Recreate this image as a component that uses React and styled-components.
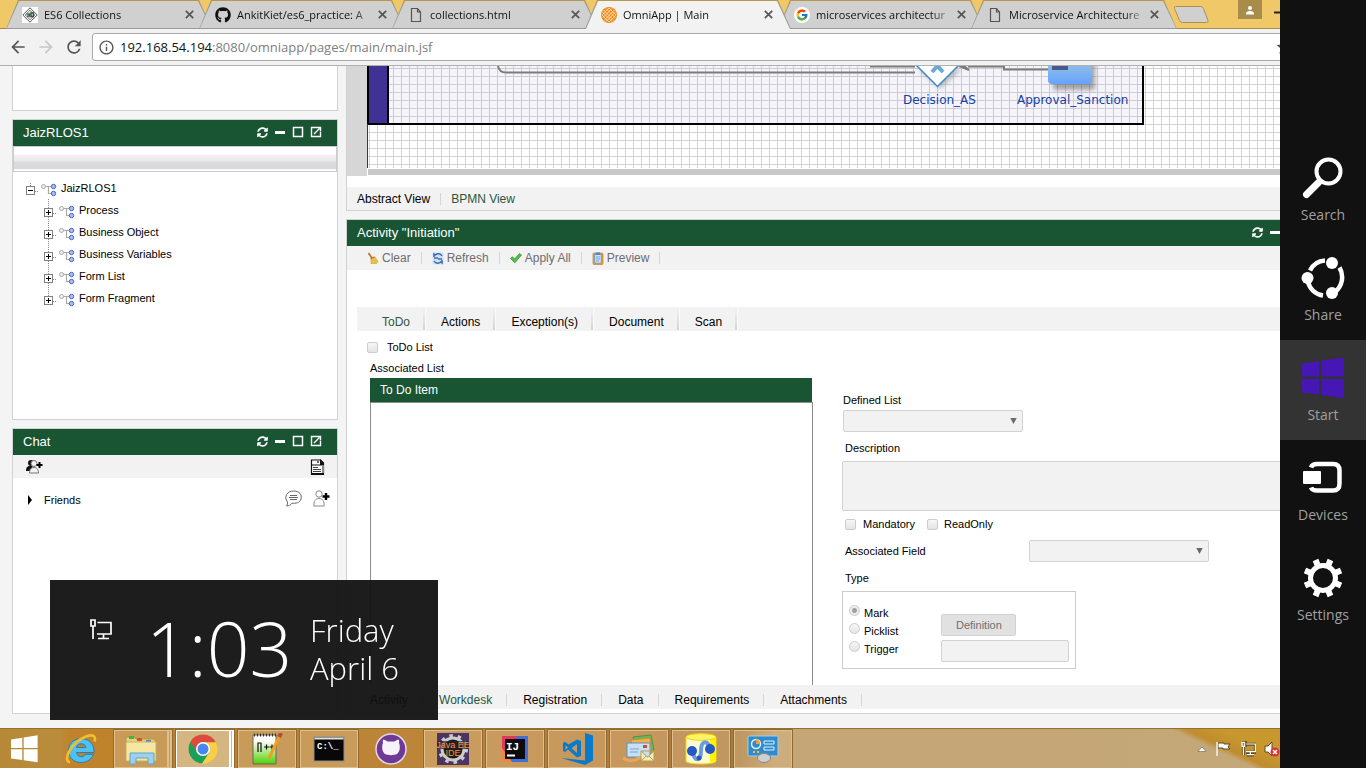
import React from "react";
import styled, { createGlobalStyle, css } from "styled-components";
import { MdArrowBack, MdArrowForward, MdRefresh, MdInfoOutline, MdStar } from "react-icons/md";
import { FaGithub, FaSyncAlt } from "react-icons/fa";
import { FcGoogle } from "react-icons/fc";

const GREEN = "#195532";
const UI = `"Open Sans", "Noto Sans", sans-serif`;

const GlobalStyle = createGlobalStyle`
  *, *::before, *::after { box-sizing: border-box; }
  body {
    margin: 0;
    overflow: hidden;
    background: #f4f4f4;
    color: #000;
    font: 12px/16px "Liberation Sans", Arial, sans-serif;
  }
  button, input, select, textarea { font: inherit; color: inherit; }
  button { border: 0; padding: 0; background: none; }
  a { color: inherit; text-decoration: none; }
  ul { list-style: none; margin: 0; padding: 0; }
  svg { display: block; flex: none; }
`;

const Desktop = styled.div`
  display: flex;
  flex-direction: column;
  min-height: 100vh;
`;

/* ---------- browser chrome ---------- */

const TabStrip = styled.div`
  display: flex;
  align-items: stretch;
  height: 29px;
  padding-left: 6px;
  background: #f0c868;
  border-bottom: 1px solid #a08a58;
  font: 11px/16px ${UI};
`;

const BrowserTab = styled.button`
  position: relative;
  display: flex;
  align-items: center;
  width: 206px;
  height: 29px;
  margin-right: -13px;
  padding: 0 18px 0 16px;
  gap: 6px;
  color: #111;
  z-index: ${(p) => (p.$active ? 2 : 0)};

  &::before,
  &::after {
    content: "";
    position: absolute;
    z-index: -1;
  }
  &::before {
    inset: 0;
    background: linear-gradient(#b8964a 0 2px, #999 6px);
    clip-path: polygon(0 100%, 12px 0, calc(100% - 13px) 0, 100% 100%);
  }
  &::after {
    inset: 1px 1px ${(p) => (p.$active ? "0" : "1px")} 1px;
    background: ${(p) => (p.$active ? "#f2f2f2" : "#d0d0d0")};
    clip-path: polygon(0 100%, 12px 0, calc(100% - 13px) 0, 100% 100%);
  }
`;

const TabTitle = styled.span`
  flex: 1;
  white-space: nowrap;
  text-align: left;
  mask-image: linear-gradient(90deg, #000 calc(100% - 20px), rgba(0, 0, 0, 0.2));
`;

const NewTab = styled.button`
  align-self: center;
  width: 35px;
  height: 17px;
  margin-left: 10px;
`;

const WindowButtons = styled.div`
  display: flex;
  gap: 12px;
  margin-left: auto;
  padding-right: 82px;
`;

const UserButton = styled.button`
  display: grid;
  place-items: center;
  width: 24px;
  height: 19px;
  background: #a88c4c;
`;

const Toolbar = styled.div`
  display: flex;
  align-items: center;
  height: 37px;
  padding: 0 64px 0 8px;
  gap: 8px;
  background: #f2f2f2;
  border-bottom: 1px solid #b0b0b0;
`;

const NavButton = styled.button`
  display: grid;
  place-items: center;
  width: 20px;
  height: 20px;
  color: ${(p) => (p.disabled ? "#c8c8c8" : "#555")};
`;

const Omnibox = styled.label`
  display: flex;
  flex: 1;
  align-items: center;
  height: 28px;
  padding: 0 8px 0 5px;
  gap: 5px;
  border: 1px solid #a9a9a9;
  border-radius: 3px;
  background: #fff;
  color: #555;
`;

const Address = styled.span`
  flex: 1;
  font: 13px/20px ${UI};
  color: #808080;
  b { font-weight: 400; color: #111; }
`;

/* ---------- page ---------- */

const Page = styled.main`
  display: flex;
  flex: 1;
  gap: 8px;
  padding: 0 33px 14px 12px;
`;

const SideColumn = styled.aside`
  display: flex;
  flex: 0 0 326px;
  flex-direction: column;
  gap: 8px;
`;

const MainColumn = styled.div`
  display: flex;
  flex: 1;
  flex-direction: column;
  gap: 8px;
  min-width: 0;
`;

const Panel = styled.section`
  display: flex;
  flex-direction: column;
  flex: ${(p) => (p.$grow ? "1" : "none")};
  min-height: ${(p) => p.$min || 0}px;
  background: #fff;
  border: 1px solid #d2d2d2;
  ${(p) => p.$openTop && css`border-top: 0;`}
`;

const PanelHeader = styled.header`
  display: flex;
  align-items: center;
  justify-content: space-between;
  height: 26px;
  padding: 0 14px 0 10px;
  background: ${GREEN};
  color: #fff;
`;

const PanelTitle = styled.h2`
  margin: 0;
  font-weight: 400;
  font-size: 13px;
  line-height: 16px;
`;

const PanelTools = styled.div`
  display: flex;
  gap: 4px;
  padding-bottom: 2px;
`;

const ToolButton = styled.button`
  display: grid;
  place-items: center;
  width: 14px;
  height: 14px;
  color: #fff;
`;

const GradientBar = styled.div`
  height: 26px;
  border: 1px solid #ccc;
  background: linear-gradient(#fff 30%, #f2f0f2 34%, #eae8ea 58%, #dcdadd 64%, #d8d8da 92%, #fff 94%);
`;

const Tree = styled.ul`
  padding: 5px 0 0 12px;
  font-size: 11px;
`;

const TreeRow = styled.div`
  display: flex;
  height: 22px;
  gap: 2px;
  line-height: 22px;
`;

const Branch = styled.ul`
  padding-left: 18px;
`;

const ChatBar = styled.div`
  display: flex;
  align-items: center;
  justify-content: space-between;
  height: 23px;
  padding: 0 12px 0 13px;
  background: #f2f2f2;
`;

const ChatGroup = styled.div`
  display: flex;
  align-items: center;
  height: 40px;
  padding: 0 7px 0 14px;
  gap: 11px;
  font-size: 11px;
  span { flex: 1; padding-top: 4px; }
`;

/* ---------- process canvas ---------- */

const CanvasFrame = styled.div`
  display: flex;
  height: 121px;
`;

const Gutter = styled.div`
  width: 20px;
  height: 110px;
  background: #d6d6d6;
`;

const CanvasArea = styled.div`
  flex: 1;
  min-width: 0;
  svg { width: 100%; }
`;

const CanvasScroll = styled.div`
  height: 6px;
  margin: 1px 0 0 1px;
  background: #c8c8c8;
`;

/* ---------- strips of links ---------- */

const LinkStrip = styled.nav`
  display: flex;
  align-items: center;
  height: ${(p) => p.$height || 24}px;
  margin: ${(p) => (p.$inset ? "0 0 4px 10px" : "0")};
  padding: ${(p) => (p.$inset ? "5px 0 0 13px" : "0 0 0 10px")};
  background: #f2f2f2;
`;

const StripLink = styled.a`
  color: ${(p) => (p.$on ? "#28573c" : "#000")};
`;

const Divider = styled.i`
  width: 1px;
  height: 12px;
  margin: ${(p) => p.$m || "0 16px 0 14px"};
  background: #cfd8d3;
`;

const ActionBar = styled.div`
  display: flex;
  align-items: center;
  height: 24px;
  padding-left: 20px;
  background: #f2f2f2;
  color: #6e6e6e;
`;

const ActionButton = styled.button`
  display: flex;
  align-items: center;
  gap: 3px;
`;

const FormTabs = styled.div`
  display: flex;
  height: 24px;
  margin: 37px 0 0 10px;
  padding-left: 10px;
  background: #f2f2f2;
`;

const FormTab = styled.button`
  height: 22px;
  margin-top: 1px;
  padding: 5px 15px 0;
  background: linear-gradient(#f2f2f2, #d4d4d4) right / 2px 100% no-repeat;
  border-right: 1px solid #fafafa;
  color: ${(p) => (p.$on ? "#33573f" : "#000")};
`;

/* ---------- form ---------- */

const FormArea = styled.div`
  display: flex;
  flex: 1;
  flex-direction: column;
  padding: 0 0 0 20px;
  font-size: 11px;
`;

const CheckLabel = styled.label`
  display: flex;
  align-items: center;
  gap: ${(p) => p.$gap || 6}px;
`;

const TodoLine = styled.div`
  display: flex;
  align-items: center;
  height: 29px;
  padding-top: 3px;
`;

const Tick = styled.input`
  appearance: none;
  width: 11px;
  height: 11px;
  margin: 0;
  border: 1px solid #ccc;
  border-radius: ${(p) => (p.type === "radio" ? "50%" : "2px")};
  background: linear-gradient(#f6f6f6, #e4e4e4);
  &[type="radio"]:checked {
    background: radial-gradient(circle, #a0a0a0 0 2px, #ececec 3px);
  }
`;

const Columns = styled.div`
  display: flex;
  flex: 1;
  gap: 29px;
  padding-left: 3px;
`;

const ListColumn = styled.div`
  display: flex;
  flex-direction: column;
  width: 443px;
  gap: 2px;
`;

const TodoList = styled.div`
  display: flex;
  flex: 1;
  flex-direction: column;
`;

const TodoTable = styled.table`
  width: calc(100% - 1px);
  border-collapse: collapse;
  th {
    height: 24px;
    padding: 0 10px;
    background: ${GREEN};
    color: #fff;
    font-weight: 400;
    font-size: 12px;
    text-align: left;
  }
`;

const TodoBody = styled.div`
  flex: 1;
  border: solid #8c8c8c;
  border-width: 1px 1px 0;
`;

const Fields = styled.form`
  display: flex;
  flex: 1;
  flex-direction: column;
  align-items: flex-start;
  padding-top: 32px;
`;

const FieldLabel = styled.label`
  display: block;
  margin: ${(p) => p.$m || "0"};
  line-height: 16px;
`;

const fieldBox = css`
  border: 1px solid #d2d2d2;
  border-radius: 2px;
  background: #f2f2f2;
`;

const SelectWrap = styled.div`
  position: relative;
  width: 180px;
  margin-left: ${(p) => p.$left || 0}px;
  svg { position: absolute; right: 6px; top: 7px; pointer-events: none; }
`;

const Select = styled.select`
  ${fieldBox}
  appearance: none;
  display: block;
  width: 100%;
  height: 22px;
  opacity: 1;
`;

const Description = styled.textarea`
  ${fieldBox}
  display: block;
  width: calc(100% - 8px);
  height: 50px;
  resize: none;
`;

const FlagRow = styled.div`
  display: flex;
  align-items: center;
  gap: 12px;
  height: 26px;
  padding-left: 3px;
`;

const FieldRow = styled.div`
  display: flex;
  align-items: center;
  gap: 103px;
  margin: 3px 0 8px 3px;
`;

const TypeBox = styled.fieldset`
  display: flex;
  gap: 43px;
  width: 234px;
  height: 78px;
  margin: 5px 0 0;
  padding: 12px 6px 0;
  border: 1px solid #ccc;
  min-width: 0;
`;

const RadioLabel = styled.label`
  display: flex;
  gap: 4px;
  height: 18px;
  padding-top: 1px;
`;

const TypeActions = styled.div`
  display: flex;
  flex-direction: column;
  align-items: flex-start;
  gap: 4px;
  padding-top: 10px;
`;

const DefinitionButton = styled.button`
  width: 75px;
  height: 22px;
  border: 1px solid #d2d2d2;
  border-radius: 2px;
  background: #e1e1e1;
  color: #707070;
`;

const TypeInput = styled.input`
  ${fieldBox}
  width: 128px;
  height: 22px;
`;

/* ---------- desktop overlays ---------- */

const Taskbar = styled.footer`
  display: flex;
  align-items: center;
  height: 40px;
  gap: 4px;
  border-top: 1px solid #94702e;
  background:
    linear-gradient(25deg, transparent 86.5%, #bf8c2e 87.5%, #c8982e 90%),
    linear-gradient(90deg, #b68938 0, #ba8c3c 60px, #c0832a 70px, #b9812f 200px, #bd8538 420px, #b57a38 640px, #a57b40 740px, #c5a676 775px, #c4a878 1366px);
`;

const TaskButton = styled.button`
  display: grid;
  place-items: center;
  width: ${(p) => (p.$start ? 48 : 58)}px;
  height: 38px;
  ${(p) =>
    p.$open &&
    css`
      border: 1px solid ${p.$active ? "#fff" : "#dfc08d"};
      outline: 1px solid #8f6a35;
      background: rgba(${p.$active ? "235,225,200,.55" : "215,180,130,.5"});
    `}
  ${(p) =>
    p.$stacked &&
    css`
      border-right-width: 5px;
      border-right-style: double;
    `}
`;

const Tray = styled.div`
  display: flex;
  align-items: center;
  gap: 8px;
  margin-left: auto;
  padding-right: 86px;
`;

const Charms = styled.nav`
  position: fixed;
  inset: 0 0 0 auto;
  z-index: 10;
  display: flex;
  flex-direction: column;
  justify-content: center;
  width: 86px;
  padding-top: 12px;
  background: #111;
`;

const Charm = styled.button`
  display: flex;
  flex-direction: column;
  align-items: center;
  height: 100px;
  padding-top: 16px;
  gap: 1px;
  background: ${(p) => (p.$on ? "#333" : "none")};
  color: #a0a0a0;
  font: 14px/24px ${UI};
`;

const Clock = styled.div`
  position: fixed;
  left: 50px;
  bottom: 48px;
  z-index: 9;
  display: flex;
  width: 388px;
  height: 140px;
  padding-left: 38px;
  background: rgba(17, 17, 17, 0.95);
  color: #fff;
  font-family: ${UI};
  font-weight: 300;
  svg { margin-top: 38px; }
`;

const Time = styled.div`
  width: 150px;
  margin-left: 34px;
  padding-top: 14px;
  font-size: 75px;
  line-height: 108px;
  white-space: nowrap;
`;

const DateText = styled.div`
  margin-left: 14px;
  padding-top: 31px;
  font-size: 31px;
  line-height: 38px;
  white-space: nowrap;
`;

/* ---------- drawings ---------- */

const Favicon = {
  es6: (
    <svg width="16" height="16" viewBox="0 0 16 16">
      <rect width="16" height="16" fill="#fff" />
      <path d="M8 .8 15.2 8 8 15.2.8 8z" fill="none" stroke="#555" />
      <path d="M8 3 13 8 8 13 3 8z" fill="#cfd6d0" stroke="#666" strokeWidth=".6" />
      <path d="M4.500 7.200h3v2h-2.500M9 6h2.500v3.500H9z" fill="none" stroke="#2c5a3c" strokeWidth="1.300" />
    </svg>
  ),
  github: <FaGithub size={16} color="#111" />,
  file: (
    <svg width="16" height="16" viewBox="0 0 16 16">
      <path d="M3.500 1.500h6l3 3.500v9.500h-9zM9.500 1.500V5h3" fill="none" stroke="#555" strokeWidth="1.200" />
    </svg>
  ),
  omni: (
    <svg width="16" height="16" viewBox="0 0 16 16">
      <circle cx="8" cy="8" r="8" fill="#f08a1c" />
      <g stroke="#ffe3bd" strokeWidth=".8" fill="none">
        <path d="M2.500 3 13 13.500M13.500 3 3 13.500M5 1.500 14.500 11M1.500 5 11 14.500M11 1.500 1.500 11M14.500 5 5 14.500M8 1l7 7-7 7-7-7z" />
      </g>
    </svg>
  ),
  google: (
    <svg width="16" height="16" viewBox="0 0 16 16">
      <circle cx="8" cy="8" r="8" fill="#fff" />
      <FcGoogle size={13} x="1.500" y="1.500" />
    </svg>
  ),
};

const CloseGlyph = () => (
  <svg width="9" height="9" viewBox="0 0 9 9">
    <path d="M.8.8l7.400 7.400M8.200.8.8 8.200" stroke="#555" strokeWidth="1.700" />
  </svg>
);

const Tools = ({ name }) => (
  <PanelTools>
    <ToolButton aria-label={`Refresh ${name}`}>
      <FaSyncAlt size={11} />
    </ToolButton>
    <ToolButton aria-label={`Minimise ${name}`}>
      <svg width="12" height="12"><path d="M1 6.500h10" stroke="#fff" strokeWidth="3" /></svg>
    </ToolButton>
    <ToolButton aria-label={`Maximise ${name}`}>
      <svg width="12" height="12"><rect x="1.500" y="1.500" width="9" height="9" fill="none" stroke="#fff" strokeWidth="1.500" /></svg>
    </ToolButton>
    <ToolButton aria-label={`Open ${name}`}>
      <svg width="12" height="12"><path d="M6.500 1.500H1.500v9h9V6M4 8l5.500-5.500M6.500 1.500h4v4" fill="none" stroke="#fff" strokeWidth="1.400" /></svg>
    </ToolButton>
  </PanelTools>
);

const TreeGlyph = ({ root, last }) => (
  <svg width="34" height="22" viewBox="0 0 34 22">
    <path d={root ? "M5.500 6v4M10 14.500h4" : last ? "M5.500 0v10M10 14.500h4" : "M5.500 0v22M10 14.500h4"} stroke="#888" strokeDasharray="1 1" />
    <rect x="1.500" y="9.500" width="8" height="8" fill="#fff" stroke="#808080" />
    <path d={root ? "M3 13.500h5" : "M3 13.500h5M5.500 11v5"} stroke="#000" />
    <path d="M19 9.500h7M23.500 9.500v7h3" fill="none" stroke="#aaa" strokeWidth="1.200" />
    <circle cx="18.500" cy="9.500" r="2" fill="#eee" stroke="#aaa" />
    <circle cx="28.500" cy="9.500" r="2.200" fill="#a9bdf0" stroke="#4a66c8" />
    <circle cx="28.500" cy="16.500" r="2.200" fill="#a9bdf0" stroke="#4a66c8" />
  </svg>
);

const GroupAdd = () => (
  <svg width="17" height="15" viewBox="0 0 17 15">
    <circle cx="5" cy="4" r="3" fill="#111" />
    <path d="M0 12c0-3.500 1-5 4-5h3l-3 5z" fill="#111" />
    <circle cx="8" cy="4.500" r="3" fill="#f2f2f2" stroke="#777" />
    <path d="M3.500 14c0-4 2-5.500 4.500-5.500s4.500 1.500 4.500 5.500z" fill="#f2f2f2" stroke="#777" />
    <path d="M13.500 3v6M10.500 6h6" stroke="#000" strokeWidth="2" />
  </svg>
);

const FriendAdd = () => (
  <svg width="17" height="17" viewBox="0 0 17 17">
    <circle cx="6" cy="4" r="3.200" fill="#fff" stroke="#888" />
    <path d="M.8 16c0-5 1.700-7.500 5.200-7.500s5.200 2.500 5.200 7.500z" fill="#fff" stroke="#888" />
    <path d="M13 3v7M9.500 6.500h7" stroke="#000" strokeWidth="2.400" />
  </svg>
);

const Bubble = () => (
  <svg width="17" height="17" viewBox="0 0 17 17">
    <path d="M2.500 12C-1.500 7 2 1 8.500 1S17 5 16 9s-5.500 4.500-9 4.200c-1.500 2-3 2.600-5.500 2.800 1-1.200 1.200-2.500 1-4z" fill="#fff" stroke="#666" />
    <path d="M5 5.500h7M4 7.500h9M5 9.500h7" stroke="#666" />
  </svg>
);

const SaveDoc = () => (
  <svg width="15" height="16" viewBox="0 0 15 16">
    <path d="M1.500 1h9l3 3v11h-12z" fill="#fff" stroke="#111" strokeWidth="1.200" />
    <path d="M10 0l4 4v2h-4z" fill="#111" />
    <path d="M1 6h13" stroke="#111" />
    <path d="M13 6v9" stroke="#888" strokeWidth="2" />
    <path d="M7 2h2v2H7z" fill="#666" />
    <path d="M3 8.500h5M3 10.500h8M3 12.500h8" stroke="#444" />
    <path d="M1 15h13" stroke="#111" strokeWidth="2" />
  </svg>
);

const Broom = () => (
  <svg width="12" height="13" viewBox="0 0 12 13">
    <path d="M1.500 1 5.500 7" stroke="#b7792d" strokeWidth="1.800" />
    <path d="M4 6.500 8 5l3 4.500-1.500 2H4z" fill="#e8c33a" stroke="#c9a52e" strokeWidth=".6" />
    <path d="M3.800 6.800 7.500 4.800" stroke="#c44" strokeWidth="1" />
  </svg>
);
const Sync = () => (
  <svg width="12" height="13" viewBox="0 0 12 13">
    <rect x=".5" y=".5" width="11" height="12" rx="1" fill="#cfe0f4" />
    <path d="M2 5V2l1.200 1C5.500 1 8.500 1.300 10 4M10 8v3l-1.200-1C6.500 12 3.500 11.700 2 9M2 6h4M10 7H6" fill="none" stroke="#3d6cb0" strokeWidth="1.500" />
  </svg>
);
const Check = () => (
  <svg width="12" height="13" viewBox="0 0 12 13">
    <path d="M.5 6.500 2.500 4.800 4.500 7 9.500 1.500 11.500 3 4.800 10.800z" fill="#4fbf48" stroke="#2c8c2c" strokeWidth=".7" />
  </svg>
);
const Clip = () => (
  <svg width="12" height="13" viewBox="0 0 12 13">
    <rect x="1" y="1" width="10" height="11.500" rx="1" fill="#f0a63c" stroke="#c07c28" strokeWidth=".7" />
    <path d="M2.700 2.500h6.600v8.700H2.700z" fill="#cfe3fb" stroke="#4d86cf" strokeWidth=".7" />
    <path d="M4 .5h4v2.300H4z" fill="#4d86cf" />
    <path d="M4 5h4M4 7h4M4 9h3" stroke="#4d86cf" strokeWidth=".7" />
  </svg>
);

const Arrow = () => (
  <svg width="7" height="8" viewBox="0 0 7 8"><path d="M.3 1h6.400L3.500 7z" fill="#6a6a6a" /></svg>
);

const Diagram = () => (
  <svg height="102">
    <defs>
      <pattern id="grid" width="8" height="8" patternUnits="userSpaceOnUse" patternTransform="translate(2 2)">
        <path d="M0 .5h8M.5 0v8" stroke="#d4d4d4" />
      </pattern>
      <linearGradient id="task" x1="0" y1="0" x2="0" y2="1">
        <stop offset=".5" stopColor="#8fbde6" />
        <stop offset="1" stopColor="#66a3ff" />
      </linearGradient>
      <filter id="shadow"><feGaussianBlur stdDeviation="2" /></filter>
    </defs>
    <rect width="100%" height="102" fill="#fff" />
    <rect width="100%" height="102" fill="url(#grid)" />
    <rect x="1" y="-4" width="775" height="62" fill="rgba(80,60,190,.06)" stroke="#000" strokeWidth="2" />
    <rect x="2" y="0" width="18" height="57" fill="#403294" />
    <path d="M21 0v57" stroke="#000" strokeWidth="2" />
    <path d="M.5 58v44" stroke="#1b3f6e" />
    <path d="M131 0c1 5 4 6.500 8 6.500h409M503 .5h45" fill="none" stroke="#7c7c7c" strokeWidth="2" />
    <path d="M592 0l10 4-5-4zM601 .5h36V3.500h44" fill="none" stroke="#7c7c7c" strokeWidth="2" />
    <path d="M551 3l22 20 22-20z" fill="#888" opacity=".5" filter="url(#shadow)" />
    <path d="M549-1 570.500 20.500 592-1z" fill="#fff" stroke="#3e8bc5" strokeWidth="1.500" />
    <path d="M565 6l5.500-6 5.500 6" fill="none" stroke="#67a9d8" strokeWidth="4" />
    <rect x="686" y="-10" width="42" height="34" fill="#555" opacity=".5" filter="url(#shadow)" />
    <rect x="681" y="-20" width="44" height="38" rx="4" fill="url(#task)" />
    <path d="M685 0h16v4h-16z" fill="#465a8c" />
    <g fill="#1241a6" fontFamily="DejaVu Sans, Verdana, sans-serif" fontSize="12">
      <text x="536" y="38">Decision_AS</text>
      <text x="650" y="38">Approval_Sanction</text>
    </g>
  </svg>
);

const Monitor = ({ w = 24, outline }) => (
  <svg width={w} height={w} viewBox="0 0 24 24" fill="none">
    {outline && <path d="M3 1h5v8M9 5h14v12H9M15 17v4M10 21h11M5 9v12" stroke="#5d4a22" strokeWidth="4.500" />}
    <path d="M3 2h4v6H3zM5 8v13M9.500 4.500H23v11.500H9M15.500 16v4M10 20.500h11" stroke="#fff" strokeWidth="1.700" />
  </svg>
);

const WinLogo = ({ size, fill }) => (
  <svg width={size} height={size} viewBox="0 0 44 44">
    <path d="M3 8.200 19.500 5.600V20.500H3zM21.500 5.300 42 2V20.500H21.500zM3 22.500h16.500v15.700L3 35.800zM21.500 22.500H42V41.500L21.500 38.400z" fill={fill} />
  </svg>
);

const gearTeeth = Array.from({ length: 8 }, (_, i) => 22.5 + i * 45);

const charms = [
  ["Search", (
    <svg key="s" width="44" height="46" viewBox="0 0 44 46">
      <circle cx="27.500" cy="15.500" r="12" fill="none" stroke="#fff" strokeWidth="4" />
      <path d="M17.500 26.500 5.500 38.500" stroke="#fff" strokeWidth="7" strokeLinecap="round" />
    </svg>
  )],
  ["Share", (
    <svg key="h" width="44" height="46" viewBox="0 0 44 46">
      <path d="M9 14.500A18 18 0 0 1 24 4.500M38.500 11.500A19 19 0 0 1 34 36M22 39.500A18 18 0 0 1 7 26" fill="none" stroke="#fff" strokeWidth="4.500" />
      <circle cx="31" cy="7" r="6" fill="#fff" />
      <circle cx="6.500" cy="22" r="6" fill="#fff" />
      <circle cx="31" cy="37" r="6" fill="#fff" />
    </svg>
  )],
  ["Start", (
    <svg key="w" width="44" height="46" viewBox="0 0 44 46">
      <path d="M1 7.500 18 5V20.500H1zM20.500 4.600 43 1.500V20.500H20.500zM1 23h17v15.500L1 36.500zM20.500 23H43V42.500L20.500 39z" fill="#4617b4" />
    </svg>
  )],
  ["Devices", (
    <svg key="d" width="44" height="46" viewBox="0 0 44 46">
      <path d="M10 11.500c1-3 3-3.500 6-3.500h16c5 0 6.500 2.500 6.500 6.500v13c0 5-2 7-6.500 7H16c-3 0-5-.5-6-3" fill="none" stroke="#fff" strokeWidth="4.500" />
      <rect x="2" y="15" width="18" height="13" rx="1" fill="#fff" />
    </svg>
  )],
  ["Settings", (
    <svg key="g" width="44" height="46" viewBox="0 0 44 46">
      <circle cx="22" cy="22" r="12.500" fill="none" stroke="#fff" strokeWidth="5" />
      {gearTeeth.map((a) => (
        <path key={a} d="M19.500 8V3h5V8z" fill="#fff" stroke="#fff" transform={`rotate(${a} 22 22)`} />
      ))}
    </svg>
  )],
];

const ChromeLogo = () => (
  <svg width="30" height="30" viewBox="0 0 30 30">
    <circle cx="15" cy="15" r="14.500" fill="#f9cf45" />
    <path d="M15 15 2.400 7.800A14.500 14.500 0 0 0 14 29.500L21.500 18z" fill="#1aa05a" />
    <path d="M2.400 7.800A14.500 14.500 0 0 1 27.800 8.300H15L9 18z" fill="#dc4b3e" />
    <circle cx="15" cy="15" r="7" fill="#fff" />
    <circle cx="15" cy="15" r="5.500" fill="#4a86f0" />
  </svg>
);

const tasks = [
  { name: "Start", start: true, icon: <WinLogo size={30} fill="#fff" /> },
  { name: "Internet Explorer", icon: (
    <svg width="32" height="32" viewBox="0 0 32 32">
      <path d="M29 19.500H11.500c.5 5 7.500 5.500 9 1.800h8C24 33.500 3.500 32 3.500 17.500 3.500 1.500 30 1 29 19.500zM11.500 14.500h9.300c-.6-5-8.700-5-9.300 0z" fill="#4fc0f0" stroke="#1f7fbf" />
      <path d="M5 29.500c-8-2 1-20 16-26 8-3 10 .5 8.500 5" fill="none" stroke="#f4bd2e" strokeWidth="2.600" />
    </svg>
  ) },
  { name: "File Explorer", open: true, stacked: true, icon: (
    <svg width="34" height="32" viewBox="0 0 34 32">
      <path d="M2 4h8l2 2h18l2 3v19H2z" fill="#e9cf80" stroke="#b99540" />
      <path d="M5 3h5v3H5z" fill="#3ab54a" /><path d="M13 5h5v3h-5z" fill="#d9532c" /><path d="M22 7h5v3h-5z" fill="#3f8fd8" />
      <path d="M2 9h30v19H2z" fill="#f6e6a4" stroke="#cdb061" />
      <path d="M6 31V20h24v11h-6v-6H12v6z" fill="#9ed0ec" stroke="#5fa5cc" />
    </svg>
  ) },
  { name: "Chrome", open: true, stacked: true, active: true, icon: <ChromeLogo /> },
  { name: "Notepad++", open: true, icon: (
    <svg width="32" height="32" viewBox="0 0 32 32">
      <defs><linearGradient id="np" x1="0" y1="0" x2="0" y2="1"><stop offset=".2" stopColor="#fff" /><stop offset="1" stopColor="#4fd000" /></linearGradient></defs>
      <path d="M2 2h23v29H2z" fill="url(#np)" stroke="#666" />
      <path d="M3 2h22" stroke="#333" strokeWidth="3" strokeDasharray="1 2" />
      <path d="M7 19v-9h3v9M13 14h5M15.500 11.500v5M18.500 14h5M21 11.500v5" fill="none" stroke="#111" strokeWidth="1.200" />
      <path d="M29 2 18 25" stroke="#f0a020" strokeWidth="3" />
      <path d="M28 4l2-4" stroke="#b84a3c" strokeWidth="4" />
    </svg>
  ) },
  { name: "Command Prompt", open: true, icon: (
    <svg width="32" height="26" viewBox="0 0 32 26">
      <rect x="1" y="1" width="30" height="24" fill="#080808" stroke="#8c8c8c" />
      <path d="M1.500 2.500h29" stroke="#e0e0e0" strokeWidth="2" />
      <text x="4" y="13" fill="#fff" fontFamily="Liberation Mono, monospace" fontWeight="700" fontSize="9">C:\_</text>
    </svg>
  ) },
  { name: "GitHub Desktop", icon: (
    <svg width="32" height="32" viewBox="0 0 32 32">
      <circle cx="16" cy="16" r="15" fill="#6e3a96" stroke="#e4d8ea" strokeWidth="1.500" />
      <path d="M8 10c-.5-2 0-3 .5-3.500 2 .5 3 1.500 4 2h7c1-.5 2-1.500 4-2 .5.5 1 1.500.5 3.500 1.500 3 1 9-2 11-3 1.500-9 1.500-12 0-3-2-3.500-8-2-11z" fill="#f6f2f8" />
    </svg>
  ) },
  { name: "Eclipse", open: true, icon: (
    <svg width="32" height="32" viewBox="0 0 32 32">
      <rect width="32" height="32" fill="#4a3562" />
      <circle cx="16" cy="16" r="11" fill="#1c1c1c" stroke="#ccc" strokeWidth="3" />
      <circle cx="16" cy="16" r="13.500" fill="none" stroke="#ccc" strokeWidth="3" strokeDasharray="3.500 5" />
      <path d="M0 8h32v8H0z" fill="#2a2030" opacity=".7" />
      <g fill="#ff9038" fontFamily="Liberation Sans, Arial, sans-serif" fontSize="9" textAnchor="middle">
        <text x="16" y="15">Java EE</text><text x="16" y="23">IDE</text>
      </g>
    </svg>
  ) },
  { name: "IntelliJ IDEA", open: true, icon: (
    <svg width="26" height="26" viewBox="0 0 26 26">
      <path d="M0 0h26v26H0z" fill="#3f6fd8" /><path d="M0 0h15L8 26H0z" fill="#e0395c" /><path d="M0 12v14h10z" fill="#f08a3a" />
      <rect x="3" y="3" width="20" height="20" fill="#0c0c0c" />
      <text x="4" y="14" fill="#fff" fontFamily="Liberation Mono, monospace" fontWeight="700" fontSize="11">IJ</text>
      <path d="M5 19.500h8" stroke="#fff" strokeWidth="2" />
    </svg>
  ) },
  { name: "Visual Studio Code", open: true, icon: (
    <svg width="32" height="32" viewBox="0 0 32 32">
      <path d="M24 0l8 2.500v25L24 32 0 25l24 2.500z" fill="#0a7acb" />
      <path d="M16 6.500l4 1.500v15l-4 1.500-9-8L4 19l-2-1.200V10l2-1.200L7.500 11.500zM16 11l-5.500 4.300L16 20zM4.500 12.500v4.500L7 14.500z" fill="#0a7acb" fillRule="evenodd" />
    </svg>
  ) },
  { name: "Mail", open: true, icon: (
    <svg width="34" height="30" viewBox="0 0 34 30">
      <path d="M11 3 29 1l3 15-18 3z" fill="#67ba5c" stroke="#4b9642" />
      <path d="M9 6 28 4l2 15-18 2z" fill="#f1b04c" stroke="#c98f2f" />
      <path d="M5 9h23v14H5z" fill="#c7e0f6" stroke="#5c92c6" />
      <path d="M21 11h4v3h-4z" fill="#c8502c" /><path d="M8 15h9M8 18h8" stroke="#7ba6cc" />
      <path d="M1 24c5 4 12 3 18-1" fill="none" stroke="#e8a95a" strokeWidth="3" />
      <path d="M19 17h13v10H19zM19 17l6.500 6 6.500-6M19 27l5-5M32 27l-5-5" fill="#f5eab8" stroke="#b39f55" />
    </svg>
  ) },
  { name: "Database Client", open: true, icon: (
    <svg width="32" height="32" viewBox="0 0 32 32">
      <path d="M1 4v24c0 4 30 4 30 0V4z" fill="#fffbd0" stroke="#f2d800" />
      <path d="M25 6h6v22l-6 2z" fill="#fff200" />
      <ellipse cx="16" cy="4" rx="15" ry="3.300" fill="#fff36a" stroke="#f2d800" />
      <path d="M7 18c3 12 9 10 9 0s6-12 9-3" fill="none" stroke="#6b9be0" strokeWidth="4" />
      <circle cx="7" cy="18" r="5" fill="#2458c4" /><circle cx="25" cy="16" r="5" fill="#2458c4" /><circle cx="14" cy="25" r="2.500" fill="#2458c4" />
    </svg>
  ) },
  { name: "Control Panel", open: true, icon: (
    <svg width="32" height="28" viewBox="0 0 32 28">
      <rect x="1" y="1" width="30" height="20" rx="1.500" fill="#2f8bcb" stroke="#9fd0ee" />
      <circle cx="9" cy="9" r="4.500" fill="none" stroke="#dff2ff" strokeWidth="1.500" />
      <path d="M9 9V4a5 5 0 0 1 4 5z" fill="#f4a02e" />
      <path d="M17 6h10v3H17zM17 12h10v3H17z" fill="none" stroke="#dff2ff" />
      <path d="M6 17h2M10 17h2" stroke="#f4c02e" strokeWidth="2" />
      <ellipse cx="17" cy="23" rx="6.500" ry="4.500" fill="#cfcfcf" stroke="#888" />
    </svg>
  ) },
];

const browserTabs = [
  ["ES6 Collections", "es6"],
  ["AnkitKiet/es6_practice: A", "github"],
  ["collections.html", "file"],
  ["OmniApp | Main", "omni", true],
  ["microservices architectur", "google"],
  ["Microservice Architecture", "file"],
];

const branches = ["Process", "Business Object", "Business Variables", "Form List", "Form Fragment"];
const formTabs = ["ToDo", "Actions", "Exception(s)", "Document", "Scan"];
const pageTabs = ["Activity", "Workdesk", "Registration", "Data", "Requirements", "Attachments"];
const actions = [["Clear", Broom], ["Refresh", Sync], ["Apply All", Check], ["Preview", Clip]];

export default function App() {
  return (
    <Desktop>
      <GlobalStyle />
      <TabStrip>
        {browserTabs.map(([title, icon, active]) => (
          <BrowserTab key={title} $active={active}>
            {Favicon[icon]}
            <TabTitle>{title}</TabTitle>
            <CloseGlyph />
          </BrowserTab>
        ))}
        <NewTab aria-label="New tab">
          <svg width="35" height="17" viewBox="0 0 35 17">
            <path d="M1.500.5h25q2 0 3 2l4.500 12q.5 2-1.500 2h-24q-2 0-3-2l-5-12q-.5-2 1-2z" fill="#d0d0d0" stroke="#ab9055" />
          </svg>
        </NewTab>
        <WindowButtons>
          <UserButton aria-label="Profile">
            <svg width="8" height="10" viewBox="0 0 8 10"><circle cx="4" cy="3" r="2" fill="#fff" /><path d="M0 9.500C0 6.500 2 6 4 6s4 .5 4 3.500z" fill="#fff" /></svg>
          </UserButton>
          <svg width="10" height="14"><path d="M0 12.500h10" stroke="#222" strokeWidth="2" /></svg>
        </WindowButtons>
      </TabStrip>

      <Toolbar>
        <NavButton aria-label="Back"><MdArrowBack size={20} /></NavButton>
        <NavButton aria-label="Forward" disabled><MdArrowForward size={20} /></NavButton>
        <NavButton aria-label="Reload"><MdRefresh size={20} /></NavButton>
        <Omnibox>
          <MdInfoOutline size={17} />
          <Address><b>192.168.54.194</b>:8080/omniapp/pages/main/main.jsf</Address>
          <MdStar size={18} />
        </Omnibox>
      </Toolbar>

      <Page>
        <SideColumn>
          <Panel $min={45} $openTop />
          <Panel $min={301}>
            <PanelHeader><PanelTitle>JaizRLOS1</PanelTitle><Tools name="JaizRLOS1" /></PanelHeader>
            <GradientBar />
            <Tree>
              <li>
                <TreeRow><TreeGlyph root /><span>JaizRLOS1</span></TreeRow>
                <Branch>
                  {branches.map((b, i) => (
                    <li key={b}><TreeRow><TreeGlyph last={i === branches.length - 1} /><span>{b}</span></TreeRow></li>
                  ))}
                </Branch>
              </li>
            </Tree>
          </Panel>
          <Panel $grow>
            <PanelHeader><PanelTitle>Chat</PanelTitle><Tools name="Chat" /></PanelHeader>
            <ChatBar>
              <button aria-label="Add group"><GroupAdd /></button>
              <button aria-label="Save chat"><SaveDoc /></button>
            </ChatBar>
            <ChatGroup>
              <svg width="6" height="14" viewBox="0 0 6 14"><path d="M1 4l4 5-4 5z" /></svg>
              <span>Friends</span>
              <button aria-label="Message friends"><Bubble /></button>
              <button aria-label="Add friend"><FriendAdd /></button>
            </ChatGroup>
          </Panel>
        </SideColumn>

        <MainColumn>
          <Panel $openTop>
            <CanvasFrame>
              <Gutter />
              <CanvasArea><Diagram /><CanvasScroll /></CanvasArea>
            </CanvasFrame>
            <LinkStrip $height={23}>
              <StripLink href="#abstract">Abstract View</StripLink>
              <Divider $m="0 10px" />
              <StripLink href="#bpmn" $on>BPMN View</StripLink>
            </LinkStrip>
          </Panel>

          <Panel $grow>
            <PanelHeader><PanelTitle>Activity "Initiation"</PanelTitle><Tools name="Activity" /></PanelHeader>
            <ActionBar>
              {actions.map(([label, Icon]) => (
                <React.Fragment key={label}>
                  <ActionButton><Icon />{label}</ActionButton>
                  <Divider $m="0 10px" />
                </React.Fragment>
              ))}
            </ActionBar>
            <FormTabs>
              {formTabs.map((t, i) => <FormTab key={t} $on={i === 0}>{t}</FormTab>)}
            </FormTabs>
            <FormArea>
              <TodoLine>
                <CheckLabel $gap={9}><Tick type="checkbox" disabled />ToDo List</CheckLabel>
              </TodoLine>
              <Columns>
                <ListColumn>
                  <FieldLabel as="span">Associated List</FieldLabel>
                  <TodoList>
                    <TodoTable><thead><tr><th scope="col">To Do Item</th></tr></thead></TodoTable>
                    <TodoBody />
                  </TodoList>
                </ListColumn>
                <Fields>
                  <FieldLabel htmlFor="defined" $m="0 0 2px 1px">Defined List</FieldLabel>
                  <SelectWrap $left={1}><Select id="defined" disabled /><Arrow /></SelectWrap>
                  <FieldLabel htmlFor="desc" $m="8px 0 5px 3px">Description</FieldLabel>
                  <Description id="desc" disabled />
                  <FlagRow>
                    <CheckLabel $gap={7}><Tick type="checkbox" disabled />Mandatory</CheckLabel>
                    <CheckLabel><Tick type="checkbox" disabled />ReadOnly</CheckLabel>
                  </FlagRow>
                  <FieldRow>
                    <FieldLabel htmlFor="assoc">Associated Field</FieldLabel>
                    <SelectWrap><Select id="assoc" disabled /><Arrow /></SelectWrap>
                  </FieldRow>
                  <FieldLabel as="span" id="type-label" $m="0 0 0 3px">Type</FieldLabel>
                  <TypeBox aria-labelledby="type-label">
                    <div>
                      {["Mark", "Picklist", "Trigger"].map((r, i) => (
                        <RadioLabel key={r}><Tick type="radio" name="type" defaultChecked={i === 0} disabled /><span>{r}</span></RadioLabel>
                      ))}
                    </div>
                    <TypeActions>
                      <DefinitionButton disabled>Definition</DefinitionButton>
                      <TypeInput aria-label="Definition value" disabled />
                    </TypeActions>
                  </TypeBox>
                </Fields>
              </Columns>
            </FormArea>
            <LinkStrip $inset>
              {pageTabs.map((t) => (
                <React.Fragment key={t}>
                  <StripLink href={`#${t}`} $on={t === "Workdesk"}>{t}</StripLink>
                  <Divider />
                </React.Fragment>
              ))}
            </LinkStrip>
          </Panel>
        </MainColumn>
      </Page>

      <Taskbar>
        {tasks.map((t) => (
          <TaskButton key={t.name} aria-label={t.name} $start={t.start} $open={t.open} $stacked={t.stacked} $active={t.active}>
            {t.icon}
          </TaskButton>
        ))}
        <Tray>
          <svg width="10" height="10" viewBox="0 0 10 10"><path d="M1 7.500 5 3l4 4.500z" fill="#fff" stroke="#77705c" strokeWidth=".7" /></svg>
          <svg width="17" height="16" viewBox="0 0 17 16"><path d="M2 1v14M3 2h6v1h6l-2 3 2 2H8V7H3z" fill="#fff" stroke="#5d4a22" /><path d="M2 1v14" stroke="#fff" strokeWidth="1.500" /></svg>
          <Monitor w={16} outline />
          <svg width="16" height="16" viewBox="0 0 16 16"><path d="M1 5h3l4-4v14l-4-4H1z" fill="#fff" stroke="#5d4a22" /><circle cx="11" cy="11" r="4.500" fill="#dc3030" /><path d="M9 9l4 4M13 9l-4 4" stroke="#fff" strokeWidth="1.500" /></svg>
        </Tray>
      </Taskbar>

      <Clock>
        <Monitor />
        <Time>1:03</Time>
        <DateText>Friday<br />April 6</DateText>
      </Clock>

      <Charms>
        {charms.map(([name, icon]) => (
          <Charm key={name} $on={name === "Start"}>{icon}{name}</Charm>
        ))}
      </Charms>
    </Desktop>
  );
}
